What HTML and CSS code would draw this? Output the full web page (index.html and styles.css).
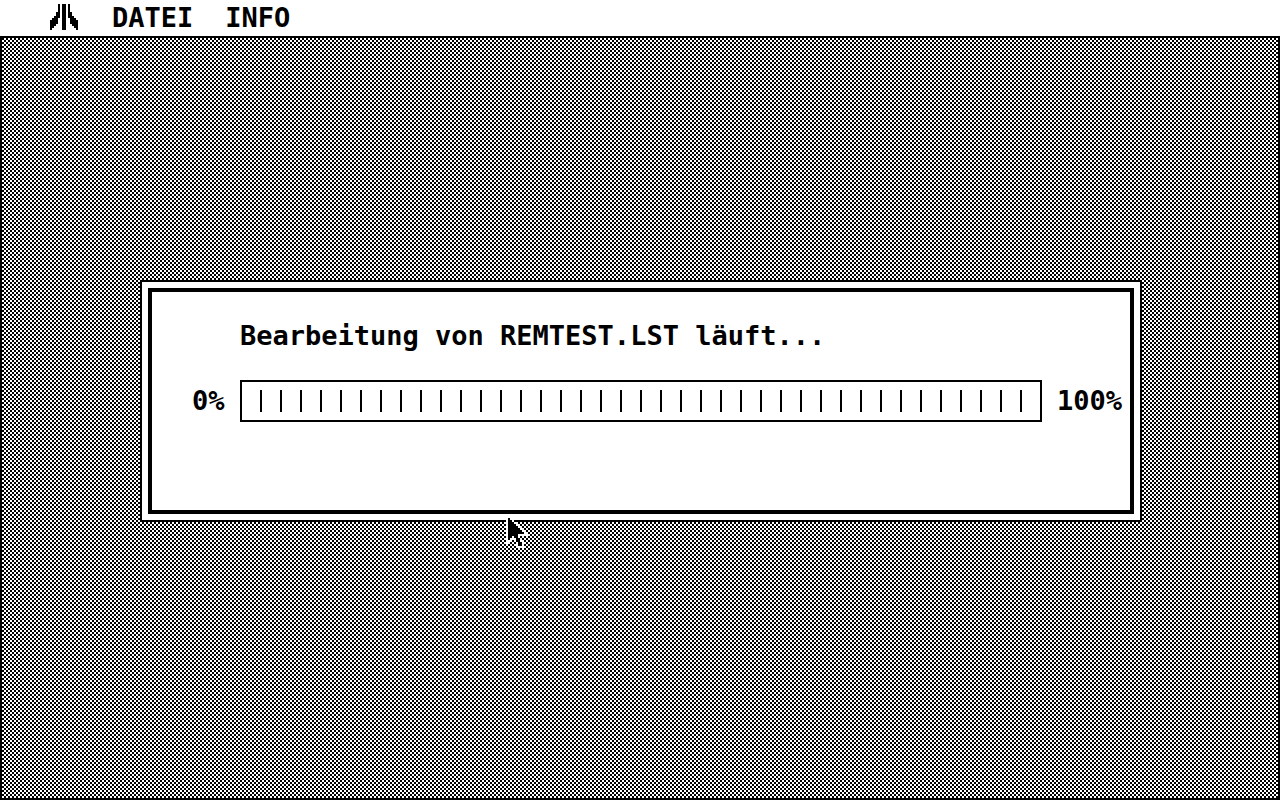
FILE: index.html
```
<!DOCTYPE html>
<html lang="de">
<head>
  <meta charset="UTF-8">
  <meta name="viewport" content="width=device-width, initial-scale=1.0">
  <title>Bearbeitung</title>
  <link rel="stylesheet" href="styles.css">
</head>
<body>
  <!-- Menüleiste -->
  <nav class="menubar">
    <button class="menu-item logo" type="button" aria-label="Desk">
      <svg width="28" height="26" viewBox="0 0 14 13" shape-rendering="crispEdges" aria-hidden="true">
        <path d="M6 0h2v13h-2z"/>
        <path d="M4 0h1v7h-1v3h-1v1h-1v1h-1v1h-1v-5h1v-1h1v-1h1v-2h1z"/>
        <path d="M9 0h1v4h1v2h1v1h1v1h1v5h-1v-1h-1v-1h-1v-1h-1v-3h-1z"/>
      </svg>
    </button>
    <button class="menu-item" type="button">DATEI</button>
    <button class="menu-item" type="button">INFO</button>
  </nav>

  <main class="desktop">
    <!-- Fortschrittsdialog -->
    <section class="dialog" role="dialog" aria-labelledby="status">
      <div class="dialog-inner">
        <label class="status" id="status" for="progress">Bearbeitung von REMTEST.LST läuft...</label>
        <div class="progress-row">
          <span>0%</span>
          <progress class="progress" id="progress" value="0" max="100"></progress>
          <span class="progress-end">100%</span>
        </div>
      </div>
    </section>
  </main>

  <!-- Mauszeiger -->
  <svg class="pointer" width="32" height="32" viewBox="0 0 16 16" shape-rendering="crispEdges" aria-hidden="true">
    <path fill="#fff" d="M0 0h2v1h1v1h1v1h1v1h1v1h1v1h1v1h1v1h1v1h1v1h-4v1h1v2h1v3h-3v-1h-1v-2h-1v-2h-1v1h-1v1h-1v1h-1z"/>
    <path d="M1 1h1v1h1v1h1v1h1v1h1v1h1v1h1v1h1v1h-3v2h1v2h1v2h-2v-2h-1v-2h-1v-1h-1v1h-1v1h-1z"/>
  </svg>
</body>
</html>
```
FILE: styles.css
```
* {
  margin: 0;
  padding: 0;
  box-sizing: border-box;
}

body {
  display: flex;
  flex-direction: column;
  min-height: 100vh;
  background-color: #fff;
  color: #000;
  font-family: "DejaVu Sans Mono", "Liberation Mono", monospace;
  font-size: 27px;
  font-weight: bold;
  line-height: 32px;
}

/* Menüleiste */
.menubar {
  display: flex;
  gap: 32px;
  height: 36px;
  padding: 0 50px;
}

.menu-item {
  display: flex;
  align-items: center;
  border: none;
  background: none;
  color: inherit;
  font: inherit;
}

.logo {
  margin-right: 2px;
  padding-bottom: 2px;
}

/* Graues Raster */
.desktop {
  flex: 1;
  padding: 242px 136px 20px 138px;
  border: 2px solid #000;
  background: repeating-conic-gradient(#fff 0 25%, #000 0 50%) 0 0 / 4px 4px;
}

/* Dialog */
.dialog {
  padding: 6px;
  border: 2px solid #000;
  background-color: #fff;
}

.dialog-inner {
  padding: 28px 8px 88px 40px;
  border: 4px solid #000;
}

.status {
  display: block;
  margin-left: 48px;
}

.progress-row {
  display: grid;
  grid-template-columns: 48px 1fr 80px;
  align-items: center;
  margin-top: 28px;
}

.progress-end {
  text-align: right;
}

.progress {
  appearance: none;
  width: 100%;
  height: 42px;
  padding: 8px 18px;
  border: 2px solid #000;
  background: #fff;
}

.progress::-webkit-progress-bar {
  height: 22px;
  background: repeating-linear-gradient(to right, #000 0 2px, #fff 2px 20px);
}

.progress::-webkit-progress-value {
  background: #000;
}

/* Mauszeiger */
.pointer {
  position: absolute;
  left: 506px;
  top: 516px;
  pointer-events: none;
}
```
